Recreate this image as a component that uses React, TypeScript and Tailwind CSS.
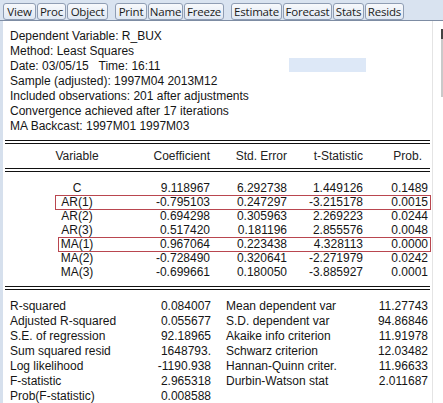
const tools = [
  [
    ['View', 33],
    ['Proc', 29],
    ['Object', 41],
  ],
  [
    ['Print', 32],
    ['Name', 35],
    ['Freeze', 40],
  ],
  [
    ['Estimate', 51],
    ['Forecast', 49],
    ['Stats', 31],
    ['Resids', 39],
  ],
] as const;

const header = [
  'Dependent Variable: R_BUX',
  'Method: Least Squares',
  'Date: 03/05/15   Time: 16:11',
  'Sample (adjusted): 1997M04 2013M12',
  'Included observations: 201 after adjustments',
  'Convergence achieved after 17 iterations',
  'MA Backcast: 1997M01 1997M03',
];

const coefs = [
  { v: 'C', c: '9.118967', se: '6.292738', t: '1.449126', p: '0.1489' },
  { v: 'AR(1)', c: '-0.795103', se: '0.247297', t: '-3.215178', p: '0.0015', box: 'ar' },
  { v: 'AR(2)', c: '0.694298', se: '0.305963', t: '2.269223', p: '0.0244' },
  { v: 'AR(3)', c: '0.517420', se: '0.181196', t: '2.855576', p: '0.0048' },
  { v: 'MA(1)', c: '0.967064', se: '0.223438', t: '4.328113', p: '0.0000', box: 'ma' },
  { v: 'MA(2)', c: '-0.728490', se: '0.320641', t: '-2.271979', p: '0.0242' },
  { v: 'MA(3)', c: '-0.699661', se: '0.180050', t: '-3.885927', p: '0.0001' },
];

const stats = [
  ['R-squared', '0.084007', 'Mean dependent var', '11.27743'],
  ['Adjusted R-squared', '0.055677', 'S.D. dependent var', '94.86846'],
  ['S.E. of regression', '92.18965', 'Akaike info criterion', '11.91978'],
  ['Sum squared resid', '1648793.', 'Schwarz criterion', '12.03482'],
  ['Log likelihood', '-1190.938', 'Hannan-Quinn criter.', '11.96633'],
  ['F-statistic', '2.965318', 'Durbin-Watson stat', '2.011687'],
  ['Prob(F-statistic)', '0.008588', '', ''],
];

const DoubleRule = ({ className }: { className: string }) => (
  <div className={`w-[425px] h-[4px] border-t border-b border-[#111] ${className}`} />
);

export default function App() {
  return (
    <div className="w-[443px] h-[403px] overflow-hidden bg-white flex flex-col font-['Liberation_Sans',Arial,sans-serif] text-[12px] text-[#151515]">
      {/* toolbar */}
      <div className="h-[21px] shrink-0 bg-[#d9e3f0] border-b border-[#7d8ca3] flex items-start pt-[3px] pl-[3px] gap-[7px] font-['Open_Sans',sans-serif] text-[11.5px] tracking-[-0.2px] text-[#1b1b1b]">
        {tools.map((group, gi) => (
          <div key={gi} className="flex gap-[1px]">
            {group.map(([label, w]) => (
              <div
                key={label}
                style={{ width: w }}
                className="h-[17px] rounded-[3px] border border-[#8f9db3] bg-gradient-to-b from-[#f7f9fc] to-[#e0e8f3] flex items-center justify-center leading-none"
              >
                {label}
              </div>
            ))}
          </div>
        ))}
      </div>

      <div className="flex flex-1 min-h-0">
        <div className="w-[3px] bg-[#d6e0ed]" />
        <div className="w-[430px] border-r border-[#e4e4e4] pl-[2px]">
          {/* header lines */}
          <div className="pt-[8px] pl-[5px] leading-[15px]">
            {header.map((line, i) =>
              i === 2 ? (
                <div key={i} className="flex items-start">
                  <span className="w-[279px] whitespace-pre">{line}</span>
                  <div className="w-[77px] h-[14px] mt-[-1px] bg-[#dde8f7]" />
                </div>
              ) : (
                <div key={i}>{line}</div>
              )
            )}
          </div>

          <DoubleRule className="mt-[6px]" />

          <div className="mt-[5px] grid grid-cols-[144px_61px_77px_76px_65px] leading-[14px] text-[#222]">
            <div className="text-center">Variable</div>
            <div className="text-right">Coefficient</div>
            <div className="text-right">Std. Error</div>
            <div className="text-right">t-Statistic</div>
            <div className="text-right pr-[6px]">Prob.</div>
          </div>

          <DoubleRule className="mt-[5px]" />

          <div className="mt-[9px] flex flex-col">
            {coefs.map((r) => (
              <div key={r.v} className="relative grid grid-cols-[144px_61px_77px_76px_65px] leading-[14px] h-[14px]">
                <div className="text-center">{r.v}</div>
                <div className="text-right">{r.c}</div>
                <div className="text-right">{r.se}</div>
                <div className="text-right">{r.t}</div>
                <div className="text-right">{r.p}</div>
                {r.box === 'ar' && (
                  <div className="absolute left-[50px] top-0 w-[376px] h-[15px] border border-[#b9464f]" />
                )}
                {r.box === 'ma' && (
                  <div className="absolute left-[53px] top-0 w-[373px] h-[15px] border border-[#b9464f]" />
                )}
              </div>
            ))}
          </div>

          <DoubleRule className="mt-[7px]" />

          <div className="mt-[9px] flex flex-col">
            {stats.map((s) => (
              <div key={s[0]} className="grid grid-cols-[140px_66px_150px_67px] leading-[15px] h-[15px]">
                <div className="pl-[5px] whitespace-nowrap">{s[0]}</div>
                <div className="text-right">{s[1]}</div>
                <div className="pl-[15px] whitespace-nowrap">{s[2]}</div>
                <div className="text-right">{s[3]}</div>
              </div>
            ))}
          </div>
        </div>
        <div className="w-[8px] bg-white" />
        <div className="w-[2px] flex flex-col">
          <div className="h-[10px] mt-[8px] bg-[#444]" />
          <div className="h-[58px] bg-[#c9c9c9]" />
        </div>
      </div>
    </div>
  );
}
